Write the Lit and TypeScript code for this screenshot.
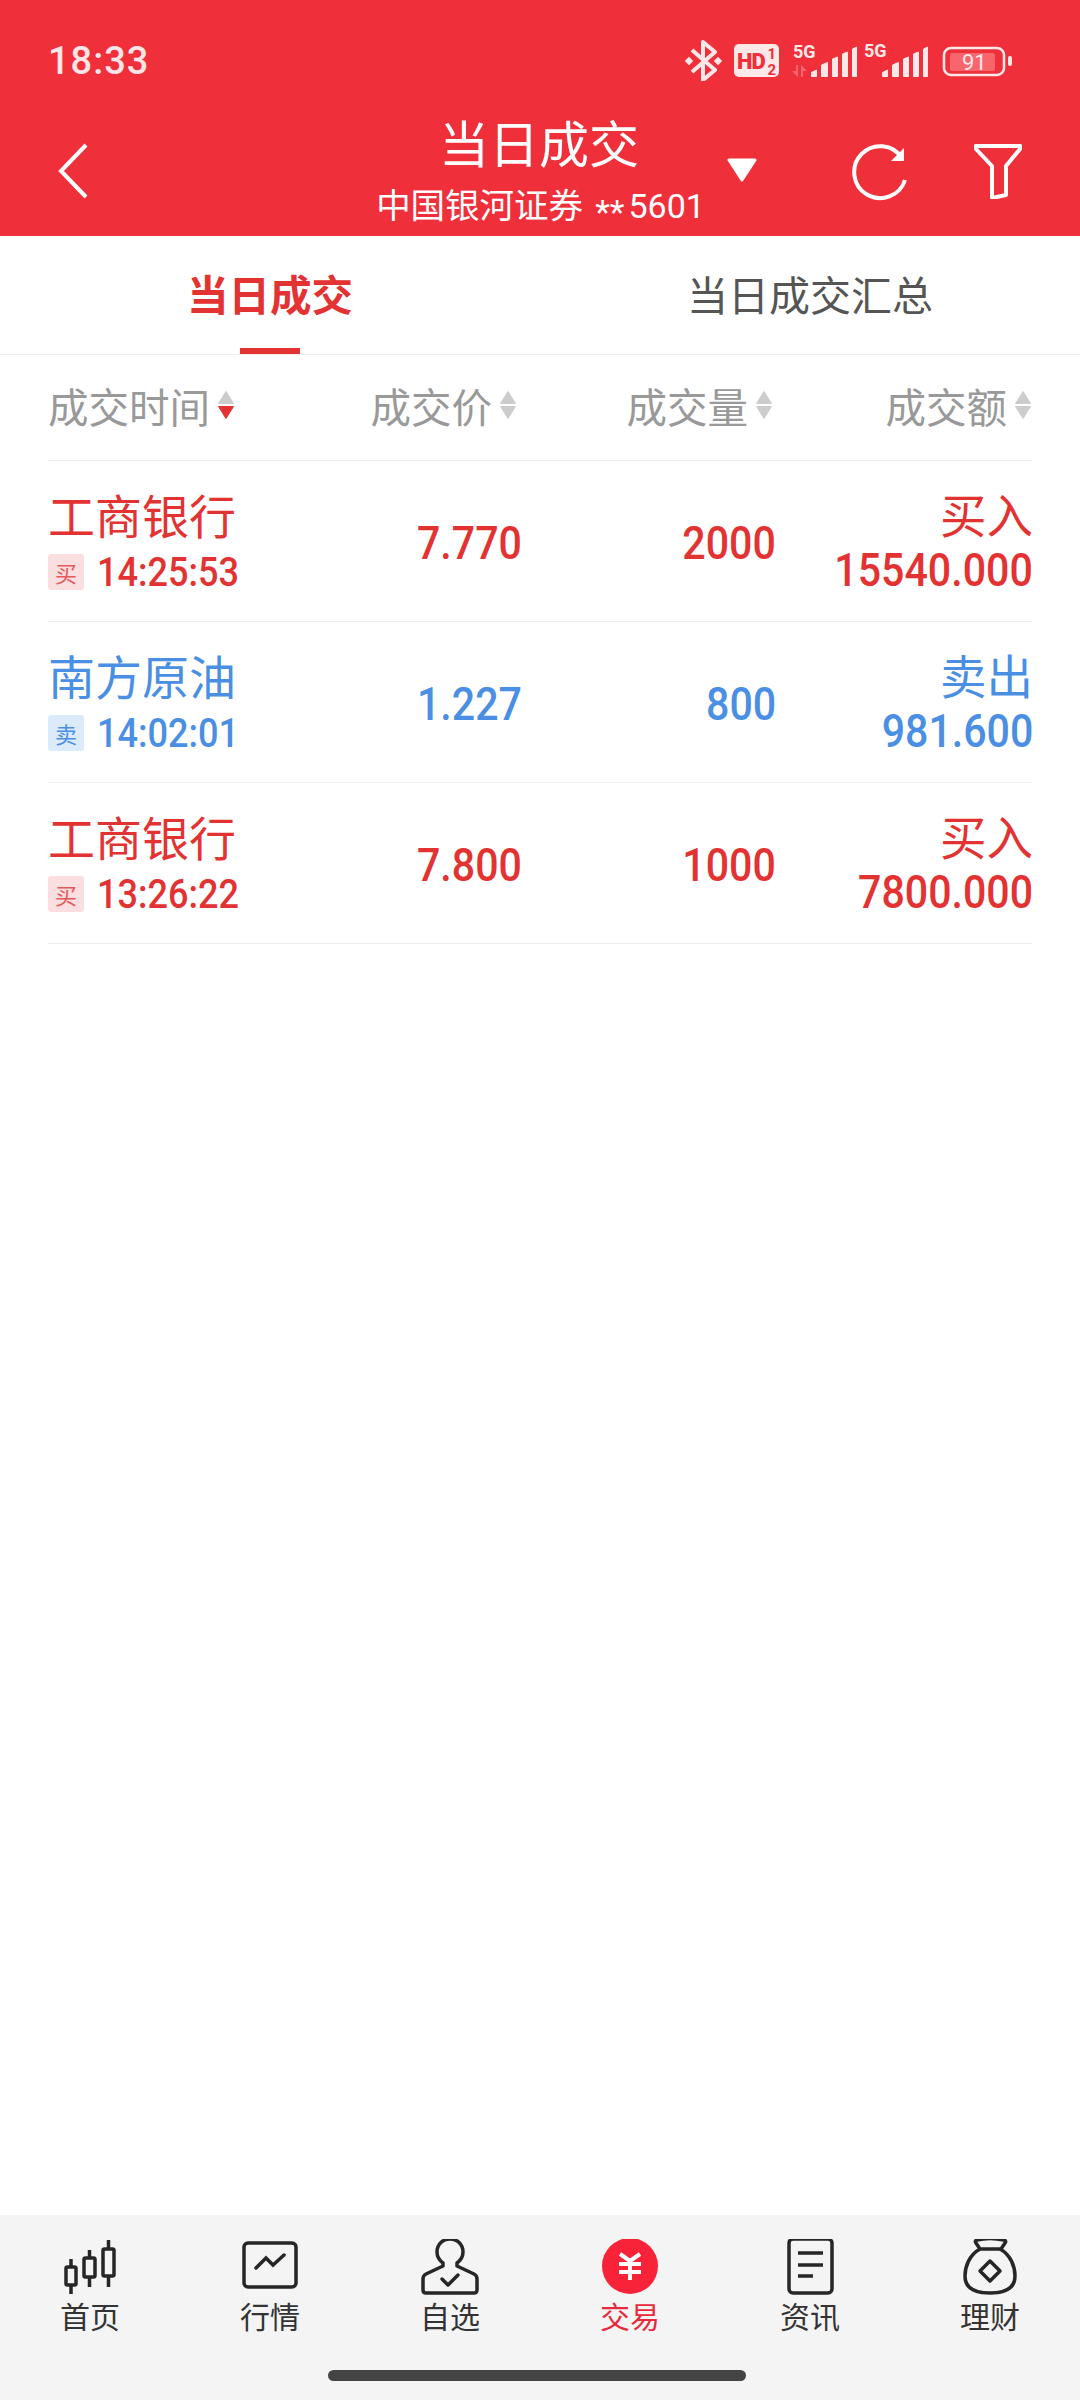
import { LitElement, html, css, svg } from "lit";
import { customElement } from "lit/decorators.js";

interface Trade { name: string; side: string; action: string; time: string; price: string; qty: string; amount: string; buy: boolean }

const TRADES: Trade[] = [
  { name: "工商银行", side: "买", action: "买入", time: "14:25:53", price: "7.770", qty: "2000", amount: "15540.000", buy: true },
  { name: "南方原油", side: "卖", action: "卖出", time: "14:02:01", price: "1.227", qty: "800", amount: "981.600", buy: false },
  { name: "工商银行", side: "买", action: "买入", time: "13:26:22", price: "7.800", qty: "1000", amount: "7800.000", buy: true },
];

const sortIcon = (active = false) => html`<svg class="sort" viewBox="0 0 18 30" width="18" height="30">
  <path d="M9 1.500 16.500 13.500H1.500Z" fill="#cccccc" stroke="#cccccc" stroke-linejoin="round"/>
  <path d="M9 28.500 16.500 16.500H1.500Z" fill=${active ? "#e33232" : "#cccccc"} stroke=${active ? "#e33232" : "#cccccc"} stroke-linejoin="round"/>
</svg>`;

const INK = "#fde8e9";
const RED = "#ef303a";

const signal = (x: number) => svg`
  <g fill=${INK} stroke=${INK} stroke-width="1" stroke-linejoin="round">
    <path d="M${x + 0.5} 76.500v-4l5-2.500v6.500Z"/>
    <path d="M${x + 10.5} 76.500V65l6-2.500v14Z"/>
    <path d="M${x + 21.5} 76.500V59l5-2v19.500Z"/>
    <path d="M${x + 31.5} 76.500V54l5-2v24.500Z"/>
    <path d="M${x + 41.5} 76.500V49l4-2v29.500Z"/>
  </g>`;

const NAV = [
  { label: "首页", icon: svg`
    <g fill="none" stroke="#262626" stroke-width="3.500" transform="translate(-4 1)">
      <rect x="10" y="27" width="10" height="18" rx="1.500"/><path d="M15 19v8M15 45v9"/>
      <rect x="28" y="18" width="11" height="19" rx="1.500"/><path d="M33.500 10v8M33.500 37v10"/>
      <rect x="47" y="9" width="11" height="27" rx="1.500"/><path d="M52.500 0v9M52.500 36v11"/>
    </g>` },
  { label: "行情", icon: svg`
    <g fill="none" stroke="#262626" stroke-width="3.500" transform="translate(-1 0)">
      <rect x="5" y="4" width="52" height="44" rx="4"/>
      <path d="M17 29 27 19 34 26 45 16" stroke-linecap="round"/>
    </g>` },
  { label: "自选", icon: svg`
    <g fill="none" stroke="#262626" stroke-width="3.500" stroke-linejoin="round">
      <path d="M23 24c-4-3-6-6-6-11C17 5 23 0 30 0s13 5 13 13c0 5-2 8-6 11v3l17 8c2 1 3 3 3 5v11c0 2-1 3-3 3H6c-2 0-3-1-3-3V40c0-2 1-4 3-5l17-8Z"/>
      <path d="M22 40l6 6 10-10" stroke-linecap="round"/>
    </g>` },
  { label: "交易", active: true, icon: svg`
    <circle cx="30" cy="27" r="28" fill="#f92339"/>
    <g fill="none" stroke="#fff" stroke-width="4">
      <path d="M20 15l10 7 10-7M30 21v20M19 25h22M19 33h22"/>
    </g>` },
  { label: "资讯", icon: svg`
    <g fill="none" stroke="#262626" stroke-width="3.500">
      <rect x="9" y="0" width="43" height="54" rx="4"/>
      <path d="M18 14h25M18 26h25M18 37h15"/>
    </g>` },
  { label: "理财", icon: svg`
    <g fill="none" stroke="#262626" stroke-width="3.500" stroke-linejoin="round">
      <path d="M17 1c8-2 18-2 27 0 2 .5 2 2 1 3l-4 6H20l-4-6c-1-1-1-2.500 1-3Z"/>
      <path d="M20 10C9 16 5 28 5 37c0 12 10 17 25 17s25-5 25-17c0-9-4-21-15-27"/>
      <path d="M30 22 40 32 30 42 20 32Z"/>
    </g>` },
];

@customElement("app-root")
export class AppRoot extends LitElement {
  static styles = css`
    :host {
      display: flex;
      flex-direction: column;
      width: 1080px;
      height: 2400px;
      background: #fff;
      font-family: "Noto Sans CJK SC", "Roboto", sans-serif;
      overflow: hidden;
    }
    .top { background: #ef303a; color: #fff; height: 236px; display: flex; flex-direction: column; flex: none; }
    .status { height: 112px; padding: 0 60px 0 48px; display: flex; align-items: center; justify-content: space-between; }
    .clock { font-family: "Roboto", sans-serif; font-weight: 500; font-size: 38px; letter-spacing: 1px; color: #fde4e6; margin-top: 10px; }
    .status svg { display: block; }
    .bar { flex: 1; display: grid; grid-template-columns: 1fr auto 1fr; padding: 0 58px 0 56px; }
    .back { align-self: center; margin-top: -7px; }
    .titles { text-align: center; margin-top: -1px; }
    .title { font-size: 50px; line-height: 60px; font-weight: 400; }
    .sub { font-size: 34.500px; line-height: 46px; margin-top: 9px; padding-left: 3px; display: flex; gap: 12px; align-items: baseline; justify-content: center; white-space: nowrap; }
    .sub b { font-family: "Roboto", sans-serif; font-weight: 400; font-size: 34px; letter-spacing: 0; }
    .sub em { font-style: normal; display: inline-block; transform: translateY(6px); margin-right: 4px; }
    .actions { display: flex; align-items: flex-start; justify-content: flex-end; padding-top: 31px; }
    .caret { margin: 15px 94px 0 0; }
    .refresh { margin: 0 65px 0 0; }
    .tabs { display: grid; grid-template-columns: 1fr 1fr; height: 119px; border-bottom: 1px solid #eeeeee; flex: none; box-sizing: border-box; }
    .tab { display: flex; flex-direction: column; align-items: center; justify-content: flex-end; font-size: 41px; color: #555; }
    .tab span { line-height: 56px; margin-bottom: 27px; }
    .tab i { display: block; width: 60px; height: 6px; background: transparent; }
    .tab.on { color: #e33232; font-weight: 700; font-size: 41.500px; }
    .tab.on i { background: #e33232; }
    main { flex: 1; padding: 0 48px; }
    .row { display: grid; grid-template-columns: 1fr 220px 256px 256px; align-items: center; border-bottom: 1px solid #eeeeee; box-sizing: border-box; }
    .head { height: 106px; font-size: 40.500px; color: #999; padding-bottom: 5px; }
    .hc { display: flex; justify-content: flex-end; align-items: center; gap: 7px; white-space: nowrap; }
    .hc:first-child { justify-content: flex-start; }
    .hc:nth-child(2), .hc:nth-child(3) { margin-right: 3px; }
    .trade { height: 161px; font-family: "Roboto", "Noto Sans CJK SC", sans-serif; font-weight: 500; font-size: 47px; }
    .trade.buy { color: #e33232; }
    .trade.sell { color: #4a8fe3; }
    .who { padding-bottom: 4px; }
    .cell-name { font-family: "Noto Sans CJK SC", sans-serif; font-weight: 400; font-size: 47px; line-height: 60px; margin-bottom: 5px; }
    .meta { display: flex; align-items: center; gap: 13px; font-family: "Roboto", sans-serif; font-size: 41px; line-height: 46px; }
    .meta span:last-child { display: inline-block; transform: scaleX(.88); transform-origin: left center; }
    .tag { width: 36px; height: 36px; border-radius: 3px; display: flex; align-items: center; justify-content: center; font: 400 22px "Noto Sans CJK SC", sans-serif; }
    .buy .tag { background: #fbdfe0; color: #e4595a; }
    .sell .tag { background: #dcebfb; color: #4a8fe3; }
    .num { text-align: right; padding-top: 2px; }
    .num:nth-child(2) { margin-right: -2px; }
    .squeeze { display: inline-block; transform: scaleX(.875); transform-origin: right center; }
    .amount { text-align: right; line-height: 56px; margin-right: -1px; }
    .amount div:first-child { font: 400 46.500px/58px "Noto Sans CJK SC", sans-serif; }
    nav { flex: none; height: 185px; background: #f4f4f4; box-sizing: border-box; padding-top: 24px; position: relative; display: grid; grid-template-columns: repeat(6, 1fr); align-items: start; }
    .item { display: flex; flex-direction: column; align-items: center; color: #333; font-size: 30px; line-height: 40px; }
    .item.on { color: #e8293c; }
    .item svg { display: block; }
    .home { position: absolute; left: 328px; bottom: 19px; width: 418px; height: 11px; background: #444; border-radius: 6px; }
  `;

  private statusIcons() {
    return html`<svg width="340" height="50" viewBox="680 31 340 50" class="icons">
      <path d="M692 50 715 70 703 80V42L715 52 692 72" fill="none" stroke=${INK} stroke-width="4" stroke-linejoin="round"/>
      <rect x="686" y="58" width="6" height="6" transform="rotate(45 689 61)" fill=${INK}/>
      <rect x="715" y="58" width="6" height="6" transform="rotate(45 718 61)" fill=${INK}/>
      <rect x="734" y="44" width="45" height="33" rx="5" fill=${INK}/>
      <text x="737" y="69" font-family="Roboto" font-weight="900" font-size="22" fill=${RED} letter-spacing="-1">HD</text>
      <text x="767.500" y="59" font-family="Roboto" font-weight="700" font-size="15" fill=${RED}>1</text>
      <text x="767.500" y="75" font-family="Roboto" font-weight="700" font-size="15" fill=${RED}>2</text>
      <text x="793" y="58" font-family="Roboto" font-weight="700" font-size="18" fill=${INK}>5G</text>
      <path d="M798 65v12l-6-6h4v-6ZM801 77V65l6 6h-4v6Z" fill="#f7666e"/>
      ${signal(811)}
      <text x="864" y="57" font-family="Roboto" font-weight="700" font-size="18" fill=${INK}>5G</text>
      ${signal(882)}
      <rect x="944" y="48" width="60" height="27" rx="7" fill="none" stroke=${INK} stroke-width="2.500"/>
      <rect x="950" y="53" width="45" height="18" rx="2" fill="#f7656d"/>
      <text x="962" y="70" font-family="Roboto" font-size="22" fill=${INK}>91</text>
      <rect x="1008" y="56" width="4" height="10" rx="2" fill=${INK}/>
    </svg>`;
  }

  render() {
    return html`
      <header class="top">
        <div class="status">
          <span class="clock">18:33</span>
          ${this.statusIcons()}
        </div>
        <div class="bar">
          <svg class="back" width="36" height="60" viewBox="0 0 36 60"><path d="M30 4 5 30l25 26" fill="none" stroke="#fff" stroke-width="4"/></svg>
          <div class="titles">
            <div class="title">当日成交</div>
            <div class="sub"><span>中国银河证券</span><b><em>**</em>5601</b></div>
          </div>
          <div class="actions">
            <svg class="caret" width="30" height="24" viewBox="0 0 30 24"><path d="M2 2h26L15 22Z" fill="#fff" stroke="#fff" stroke-width="3" stroke-linejoin="round"/></svg>
            <svg class="refresh" width="58" height="60" viewBox="0 0 58 60">
              <path d="M51 15A26 26 0 1 0 54 37" fill="none" stroke="#fff" stroke-width="4"/>
              <path d="M53 5v13H40Z" fill="#fff"/>
            </svg>
            <svg width="48" height="56" viewBox="0 0 48 56">
              <path d="M2 3h44c1 0 1 2 0 3L32 23v29l-14 3V23L2 6C1 5 1 3 2 3Z" fill="none" stroke="#fff" stroke-width="4" stroke-linejoin="round"/>
            </svg>
          </div>
        </div>
      </header>

      <div class="tabs">
        <div class="tab on"><span>当日成交</span><i></i></div>
        <div class="tab"><span>当日成交汇总</span><i></i></div>
      </div>

      <main>
        <div class="row head">
          <div class="hc">成交时间${sortIcon(true)}</div>
          <div class="hc">成交价${sortIcon()}</div>
          <div class="hc">成交量${sortIcon()}</div>
          <div class="hc">成交额${sortIcon()}</div>
        </div>
        ${TRADES.map(
          (t) => html`<div class="row trade ${t.buy ? "buy" : "sell"}">
            <div class="who">
              <div class="cell-name">${t.name}</div>
              <div class="meta"><span class="tag">${t.side}</span><span>${t.time}</span></div>
            </div>
            <div class="num"><span class="squeeze">${t.price}</span></div>
            <div class="num"><span class="squeeze">${t.qty}</span></div>
            <div class="amount"><div>${t.action}</div><div><span class="squeeze">${t.amount}</span></div></div>
          </div>`
        )}
      </main>

      <nav>
        ${NAV.map(
          (n) => html`<div class="item ${n.active ? "on" : ""}">
            <svg width="60" height="56" viewBox="0 0 60 56">${n.icon}</svg>
            <span>${n.label}</span>
          </div>`
        )}
        <div class="home"></div>
      </nav>
    `;
  }
}
